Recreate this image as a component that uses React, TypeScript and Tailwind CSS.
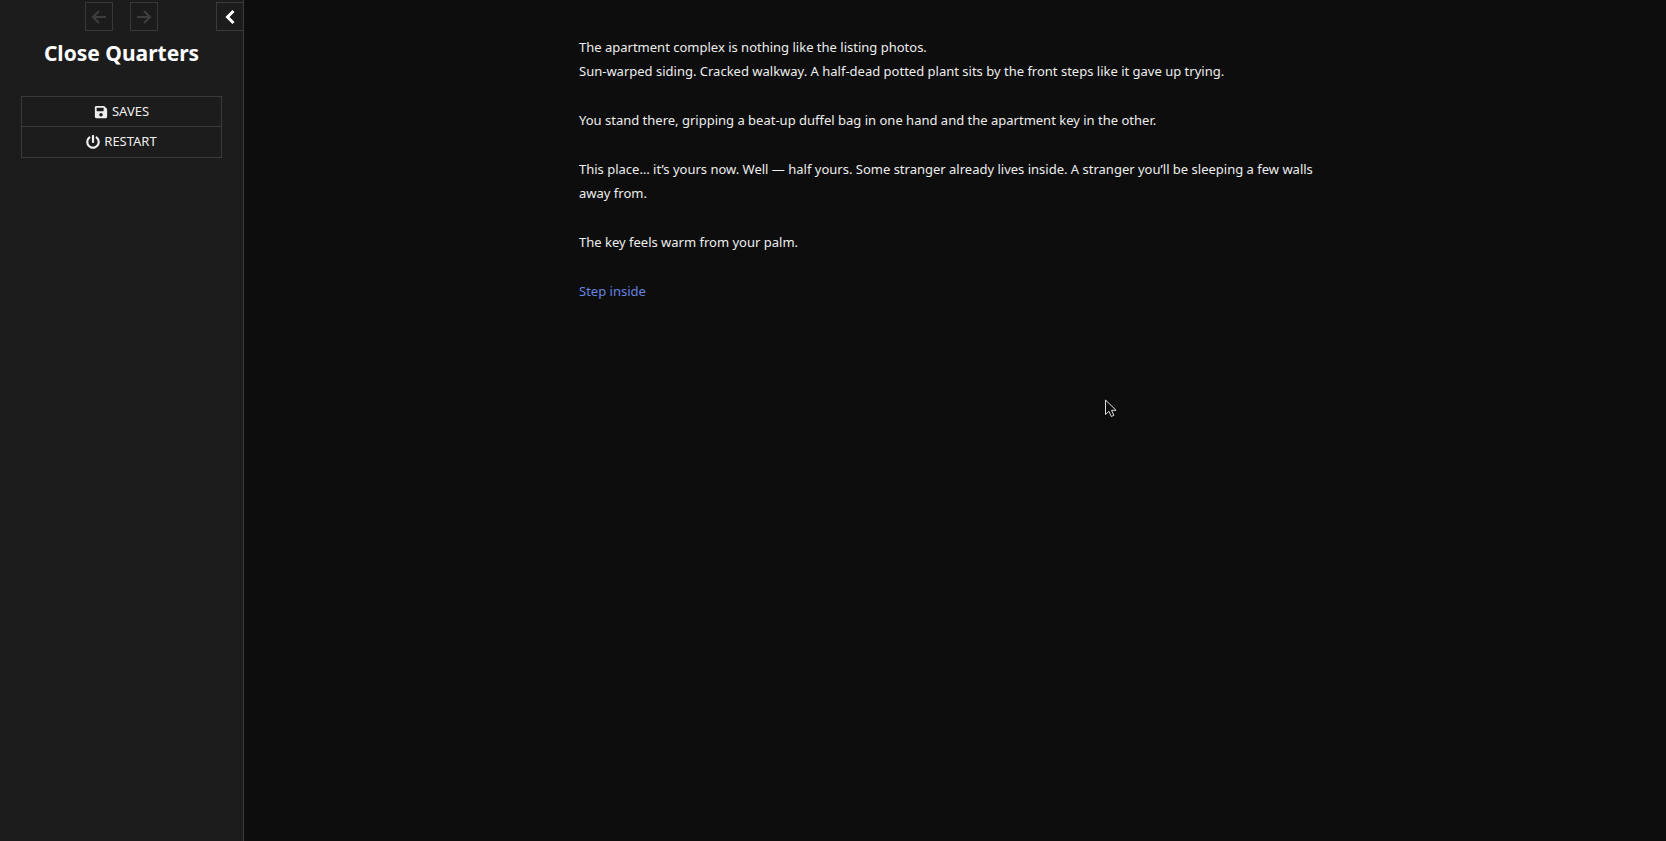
import { FaPowerOff, FaSave } from 'react-icons/fa';

const passage = [
    'You stand there, gripping a beat-up duffel bag in one hand and the apartment key in the other.',
    'This place… it’s yours now. Well — half yours. Some stranger already lives inside. A stranger you’ll be sleeping a few walls away from.',
    'The key feels warm from your palm.',
];

function Arrow({ className = '' }: { className?: string }) {
    return (
        <svg
            className={`h-4 w-4 ${className}`}
            viewBox="0 0 16 16"
            fill="none"
            stroke="currentColor"
            strokeWidth="2.2"
            aria-hidden="true"
        >
            <path d="M15 8H2M8 2 2 8l6 6" />
        </svg>
    );
}

function Chevron() {
    return (
        <svg
            className="h-4 w-4"
            viewBox="0 0 16 16"
            fill="none"
            stroke="currentColor"
            strokeWidth="3"
            aria-hidden="true"
        >
            <path d="M11.5 2 5.5 8l6 6" />
        </svg>
    );
}

function Cursor() {
    return (
        <svg
            className="pointer-events-none absolute top-[399px] left-[1105px] h-[19px] w-[12px]"
            viewBox="0 0 12 19"
            aria-hidden="true"
        >
            <path
                d="M.5 1v14.5l3.4-3.2 2.4 5.2 2.6-1.2-2.4-5h4.6z"
                fill="#0d0d0d"
                stroke="#ddd"
            />
        </svg>
    );
}

export default function App() {
    return (
        <div className="relative flex min-h-screen bg-[#0d0d0d] font-['Noto_Sans',sans-serif] text-[#eee]">
            <aside className="w-[244px] shrink-0 border-r border-[#3a3a3a] bg-[#1c1c1c]">
                <div className="flex h-8 items-center justify-end pt-px">
                    <div className="flex gap-[17px]">
                        <button
                            type="button"
                            aria-label="Go back"
                            disabled
                            className="flex h-[29px] w-7 items-center justify-center border border-[#383838] text-[#3d3d3d]"
                        >
                            <Arrow />
                        </button>
                        <button
                            type="button"
                            aria-label="Go forward"
                            disabled
                            className="flex h-[29px] w-7 items-center justify-center border border-[#383838] text-[#3d3d3d]"
                        >
                            <Arrow className="rotate-180" />
                        </button>
                    </div>
                    <button
                        type="button"
                        aria-label="Toggle the sidebar"
                        className="ml-[58px] flex h-[29px] w-[27px] items-center justify-center border border-r-0 border-[#3a3a3a] text-white"
                    >
                        <Chevron />
                    </button>
                </div>

                <h1 className="pt-[5px] text-center text-[21px] leading-8 font-bold text-white">
                    Close Quarters
                </h1>

                <nav className="mx-[21px] mt-[27px] divide-y divide-[#3a3a3a] border border-[#3a3a3a] text-[13px]">
                    <button
                        type="button"
                        className="flex h-[30px] w-full items-center justify-center gap-1"
                    >
                        <FaSave className="size-[14px]" />
                        SAVES
                    </button>
                    <button
                        type="button"
                        className="flex h-[30px] w-full items-center justify-center gap-1"
                    >
                        <FaPowerOff className="size-[14px]" />
                        RESTART
                    </button>
                </nav>
            </aside>

            <main className="flex-1 pt-[35px] pr-9 pb-9 pl-12">
                <article className="mx-auto flex max-w-[764px] flex-col gap-[25px] text-[13px] leading-6">
                    <p>
                        The apartment complex is nothing like the listing photos.
                        <br />
                        Sun-warped siding. Cracked walkway. A half-dead potted plant sits by the
                        front steps like it gave up trying.
                    </p>
                    {passage.map((text) => (
                        <p key={text}>{text}</p>
                    ))}
                    <p>
                        <a href="#" className="text-[#6684e0] hover:underline">
                            Step inside
                        </a>
                    </p>
                </article>
            </main>

            <Cursor />
        </div>
    );
}
